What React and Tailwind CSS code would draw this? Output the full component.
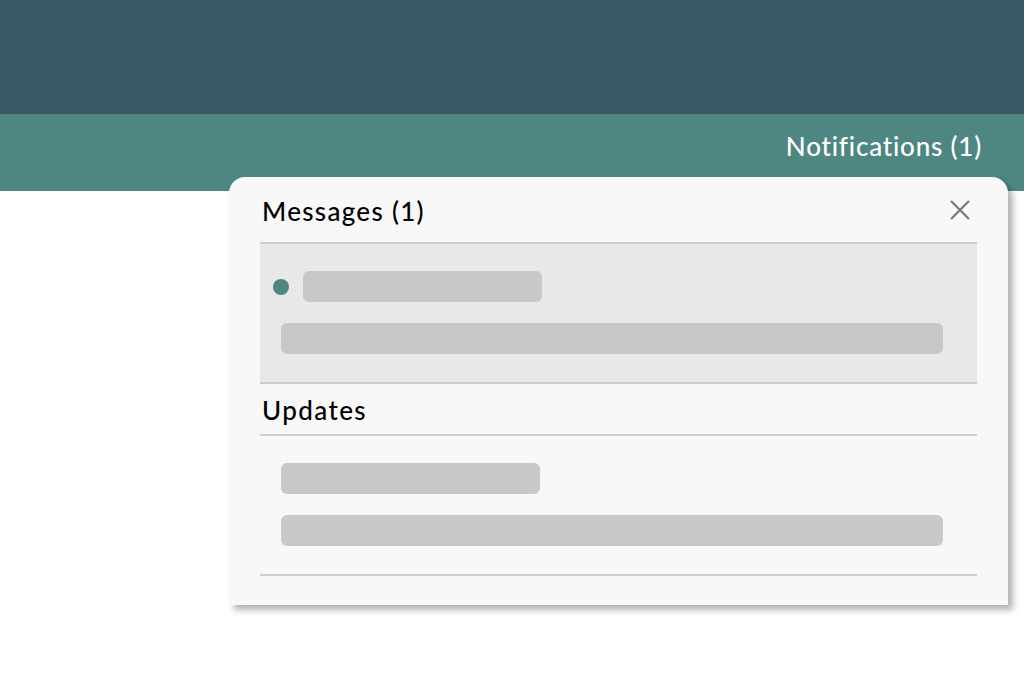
import React from 'react';

const Skeleton = ({ className }) => (
  <div className={`h-[31px] rounded-md bg-[#c8c8c8] ${className}`} />
);

const App = () => {
  return (
    <div className="min-h-[677px] bg-white font-['Lato','Noto_Sans',sans-serif]">
      <div className="h-[114px] bg-[#3b5868]" />

      <nav className="relative h-[77px] bg-[#4e8781]">
        <div className="flex h-full items-center justify-end pb-[13px] pr-[42px]">
          <span className="text-[26px] font-medium tracking-[0.8px] text-white">Notifications (1)</span>
        </div>

        {/* dropdown panel */}
        <div className="absolute left-[229px] top-[63px] w-[779px] rounded-t-2xl bg-[#f8f8f8] px-[31px] pb-[29px] shadow-[5px_5px_6px_rgba(0,0,0,0.3)]">
          <div className="flex h-[67px] items-center justify-between border-b-2 border-[#cdcdcd] pt-[3px]">
            <h2 className="ml-[2px] text-[26px] font-medium tracking-[1.3px] text-black">Messages (1)</h2>
            <button className="mr-[6px] mb-[2px] text-[#7a7a7a]">
              <svg width="22" height="22" viewBox="0 0 22 22" fill="none" stroke="currentColor" strokeWidth="2.2">
                <path d="M2 2L20 20M20 2L2 20" />
              </svg>
            </button>
          </div>

          <div className="border-b-2 border-[#cdcdcd] bg-[#e8e8e8] pl-[21px] pr-[34px] pt-[27px] pb-[28px]">
            <div className="flex items-center gap-[14px]">
              <span className="-ml-[8px] h-[16px] w-[16px] rounded-full bg-[#4e8781]" />
              <Skeleton className="w-[239px]" />
            </div>
            <Skeleton className="mt-[21px] w-full" />
          </div>

          <div className="flex h-[52px] items-center border-b-2 border-[#cdcdcd] pt-[2px]">
            <h2 className="ml-[2px] text-[26px] font-medium tracking-[1.4px] text-black">Updates</h2>
          </div>

          <div className="border-b-2 border-[#cdcdcd] pl-[21px] pr-[34px] pt-[27px] pb-[28px]">
            <Skeleton className="w-[259px]" />
            <Skeleton className="mt-[21px] w-full" />
          </div>
        </div>
      </nav>
    </div>
  );
};

export default App;
